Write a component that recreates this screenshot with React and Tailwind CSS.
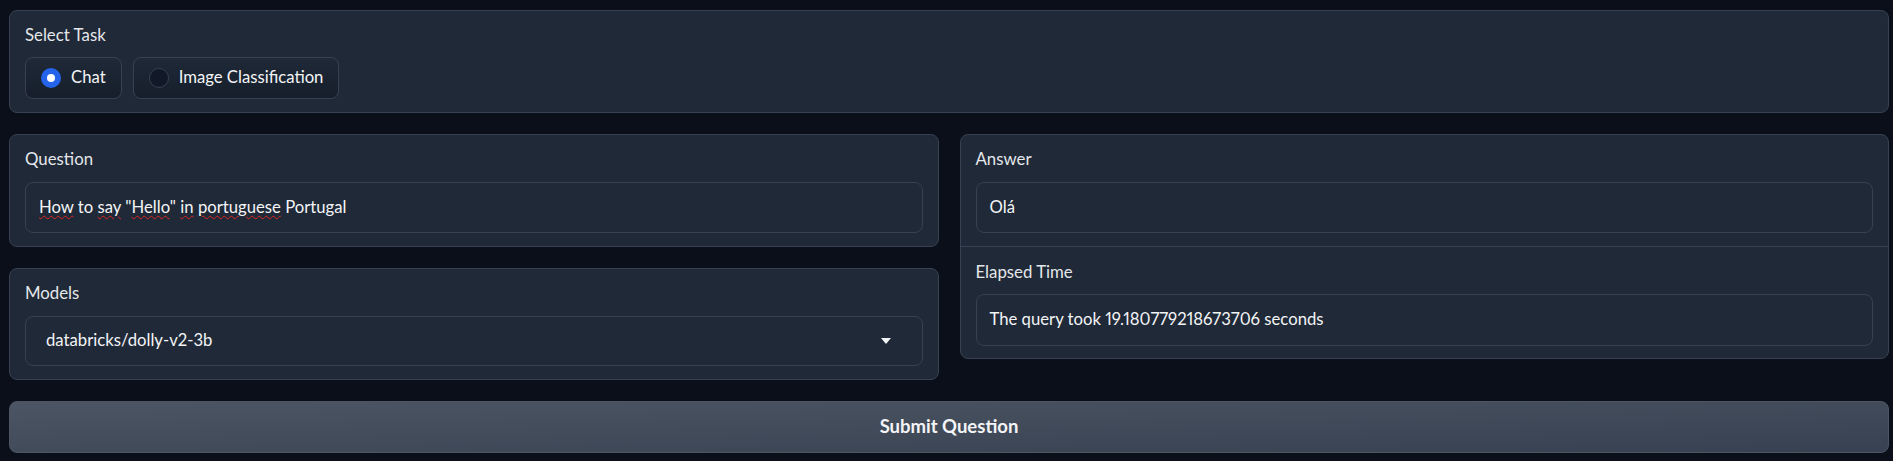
import React, { useState } from 'react';

const font = { fontFamily: 'Lato, "Liberation Sans", sans-serif' };

const Block = ({ children, className = '' }) => (
  <div className={`rounded-lg border border-[#374151] bg-[#1f2937] px-[15px] ${className}`}>
    {children}
  </div>
);

const Label = ({ children }) => (
  <div className="h-[24px] leading-[24px] text-[16.8px] text-[#e5e7eb]">{children}</div>
);

const Field = ({ children, className = '' }) => (
  <div className={`flex items-center rounded-lg border border-[#374151] bg-[#1f2937] text-[16.7px] text-[#f3f4f6] proportional-nums ${className}`}>
    {children}
  </div>
);

const Radio = ({ label, checked, onClick }) => (
  <button
    onClick={onClick}
    className="flex h-[42px] items-center gap-[10px] rounded-lg border border-[#374151] bg-gradient-to-b from-[#1f2937] to-[#161e2b] px-[15px] text-[16.7px] text-[#f3f4f6]"
  >
    {checked ? (
      <span className="flex h-[20px] w-[20px] items-center justify-center rounded-full bg-[#2563eb]">
        <span className="h-[8px] w-[8px] rounded-full bg-white" />
      </span>
    ) : (
      <span className="h-[20px] w-[20px] rounded-full border border-[#374151] bg-[#111827]" />
    )}
    {label}
  </button>
);

const Typo = ({ children }) => (
  <span className="underline decoration-wavy decoration-[#dc2626] decoration-1 underline-offset-[2px]">{children}</span>
);

export default function App() {
  const [task, setTask] = useState('chat');

  return (
    <div style={font} className="flex min-h-screen flex-col gap-[21px] bg-[#0b0f19] pl-[9px] pr-[4px] pt-[10px]">
      <Block className="pt-[12px] pb-[13px]">
        <Label>Select Task</Label>
        <div className="mt-[10px] flex gap-[11px]">
          <Radio label="Chat" checked={task === 'chat'} onClick={() => setTask('chat')} />
          <Radio label="Image Classification" checked={task === 'image'} onClick={() => setTask('image')} />
        </div>
      </Block>

      <div className="grid grid-cols-2 items-start gap-[21px]">
        <div className="flex flex-col gap-[21px]">
          <Block className="pt-[12px] pb-[13px]">
            <Label>Question</Label>
            <Field className="mt-[11px] h-[51px] px-[13px]">
              <span>
                <Typo>How</Typo> to <Typo>say</Typo> "<Typo>Hello</Typo>" <Typo>in</Typo> <Typo>portuguese</Typo> Portugal
              </span>
            </Field>
          </Block>
          <Block className="pt-[12px] pb-[13px]">
            <Label>Models</Label>
            <Field className="mt-[11px] h-[50px] justify-between pl-[20px] pr-[31px]">
              <span>databricks/dolly-v2-3b</span>
              <svg width="10" height="6" viewBox="0 0 10 6">
                <path d="M0 0 L10 0 L5 6 Z" fill="#f3f4f6" />
              </svg>
            </Field>
          </Block>
        </div>

        <div className="rounded-lg border border-[#374151] bg-[#1f2937]">
          <div className="px-[15px] pt-[12px] pb-[13px]">
            <Label>Answer</Label>
            <Field className="mt-[11px] h-[51px] px-[13px]">Olá</Field>
          </div>
          <div className="border-t border-[#374151] px-[15px] pt-[13px] pb-[12px]">
            <Label>Elapsed Time</Label>
            <Field className="mt-[10px] h-[52px] px-[13px]">The query took 19.180779218673706 seconds</Field>
          </div>
        </div>
      </div>

      <button className="h-[52px] rounded-lg border border-[#4b5563] bg-gradient-to-br from-[#4b5563] to-[#374151] text-[18.5px] font-bold text-[#f3f4f6]">
        Submit Question
      </button>
    </div>
  );
}
